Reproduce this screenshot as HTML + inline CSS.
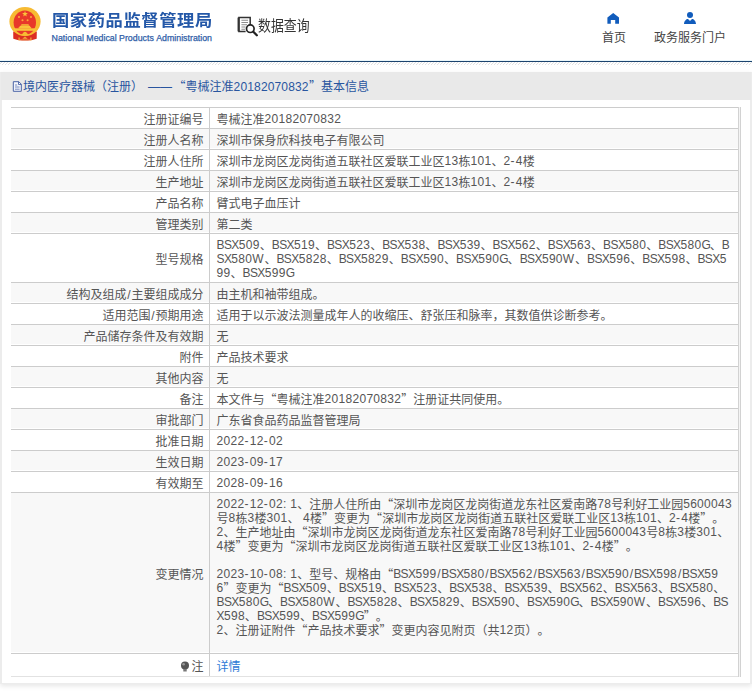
<!DOCTYPE html>
<html lang="zh-CN">
<head>
<meta charset="utf-8">
<title>国家药品监督管理局 数据查询</title>
<style>
*{box-sizing:border-box;margin:0;padding:0}
html,body{width:752px;height:691px;overflow:hidden;background:#fff}
body{text-spacing-trim:space-all;font-kerning:none;font-family:"Liberation Sans","Noto Sans CJK SC",sans-serif;font-size:12px;color:#555;position:relative}
.hdr{position:absolute;left:0;top:0;width:752px;height:61px;background:#fff}
.emblem{position:absolute;left:8px;top:5px;width:35px;height:38px}
.t1{position:absolute;left:51.7px;top:8px;font-size:16px;line-height:26px;font-weight:bold;color:#2458a8;white-space:nowrap;letter-spacing:0.55px;transform:scaleX(1.08);transform-origin:0 0}
.t2{position:absolute;left:51.6px;top:31.8px;font-size:8.8px;line-height:12px;color:#2f5ea8;white-space:nowrap;-webkit-text-stroke:0.25px #2f5ea8}
.q{position:absolute;left:258px;top:16px;font-size:15px;line-height:20px;color:#333;white-space:nowrap;transform:scaleX(.86);transform-origin:0 0}
.qi{position:absolute;left:238px;top:14px;width:22px;height:24px}
.nav{position:absolute;top:29px;font-size:12px;line-height:18px;color:#444;white-space:nowrap}
.navi{position:absolute}
.bline{position:absolute;left:0;top:61px;width:752px;height:1px;background:#1c446f;box-shadow:0 1px 0 rgba(28,68,111,.12)}
.hatch{position:absolute;left:0;top:62px;width:752px;height:3px;
 background:repeating-linear-gradient(135deg,#fff 0,#fff 1.4px,#e2e2e2 1.4px,#e2e2e2 2.12px)}
.cy{position:absolute;left:0;top:60px;width:752px;height:1px;background:#eaf7fb}
.rb{position:absolute;left:738px;top:107px;width:3px;height:570px;border-left:1px solid #d2d2d2;border-right:1px solid #d2d2d2;background:#f4f4f4}
.panel{position:absolute;left:0;top:72px;width:752px;height:612px;background:#fff;border:solid #ececec;border-width:0 2px 1px 2px;box-shadow:0 2px 5px rgba(0,0,0,.10)}
.ptitle{position:absolute;left:1px;top:72px;width:750px;height:28px;background:#e9e9e9;color:#28559f;font-size:12px;line-height:28px;white-space:nowrap}
.pt{position:absolute;top:1px;font-family:"Liberation Sans","Noto Sans CJK SC",sans-serif}
table{position:absolute;left:11px;top:107px;width:727px;border-collapse:collapse;table-layout:fixed;font-size:12px;line-height:14px;color:#555}
td{border-top:1px solid #ccc;border-bottom:1px solid #ccc;padding:5px 6px 1px 7px;vertical-align:middle;white-space:nowrap}
td.l{width:198px;text-align:right;border-right:1px solid #ccc;padding:5px 5px 1px 0}
tr.g td{background:#f8f8f8;box-shadow:inset 0 -1px 0 #fff}
.cq,td u{font-family:"Noto Sans CJK SC",sans-serif;text-decoration:none;line-height:0}
td b,td i{position:relative;top:-1px}
td b{font-weight:normal;letter-spacing:-.58px}
td i{font-style:normal;letter-spacing:.3px}
td s{text-decoration:none;letter-spacing:1.3px}
td s.sl{letter-spacing:0;margin:0 .8px}
td b.w{letter-spacing:.8px}
td b.k{letter-spacing:-1px}
.ln{display:inline-block;height:14px;vertical-align:top}
tr:last-child td{border-bottom-color:#e2e2e2}
a{color:#2f7bd6;text-decoration:none}
</style>
</head>
<body>
<div class="hdr">
  <svg class="emblem" viewBox="4 2 44 44" width="44" height="44" style="left:4px;top:2px;width:44px;height:44px">
    <defs><filter id="bl" x="-10%" y="-10%" width="120%" height="120%"><feGaussianBlur stdDeviation="0.42"/></filter></defs>
    <g filter="url(#bl)">
      <path d="M13.200 31.500 L36.800 31.500 L36.700 38.800 Q31 41.200 25 40.400 Q19 41.200 13.300 38.800 Z" fill="#dc2f24"/>
      <ellipse cx="25" cy="21.500" rx="15.600" ry="14.500" fill="#f7bb33"/>
      <ellipse cx="24.800" cy="22.600" rx="11.200" ry="12.100" fill="#e8372a"/>
      <path d="M14 28.300 H35.600 V30.800 H14 Z" fill="#f9c43a"/>
      <path d="M21.500 24.300 H28.500 L29 25.400 H21 Z M20 25.700 H29.800 L30.600 27.300 H19.200 Z M18.600 27.300 H31.200 V28.400 H18.600 Z" fill="#f9c43a"/>
      <path d="M20.800 35 Q22.500 34.300 23.200 32.700 Q25 30.600 26.800 32.700 Q27.500 34.300 29.200 35 Q25 36.300 20.800 35 Z" fill="#f7bb33"/>
      <path d="M22.300 38.700 L25 36.500 L27.700 38.700 Z" fill="#f4a93a"/>
      <path d="M18.500 37.600 H19.700 V40.500 H18.500 Z M30.300 37.600 H31.500 V40.500 H30.300 Z" fill="#f4a93a"/>
      <path d="M19.500 39.300 H30.500 V40.300 H19.500 Z" fill="#ef8f38" opacity=".75"/>
      <polygon points="25,11 25.750,13 27.900,13.100 26.200,14.400 26.800,16.500 25,15.300 23.200,16.500 23.800,14.400 22.100,13.100 24.250,13" fill="#fbc23a"/>
      <circle cx="19" cy="17" r="1.050" fill="#f9a83a"/>
      <circle cx="31" cy="17" r="1.050" fill="#f9a83a"/>
      <circle cx="22.500" cy="20.200" r="1.050" fill="#f9a83a"/>
      <circle cx="27.600" cy="20.200" r="1.050" fill="#f9a83a"/>
    </g>
  </svg>
  <div class="t1">国家药品监督管理局</div>
  <div class="t2">National Medical Products Administration</div>
  <svg class="qi" viewBox="0 0 24 24" width="24" height="24" style="left:236px;top:14px;width:24px;height:24px">
    <path d="M14.2 11.6 V3.600 H2.900 V17.4 H9.6" fill="none" stroke="#333" stroke-width="1.5"/>
    <path d="M2.600 3.600 V17.4" stroke="#333" stroke-width="2.1"/>
    <path d="M5.400 6.300 H12 M5.400 8.500 H12 M5.400 10.800 H11 M5.400 13 H9.500 M5.400 15.200 H9" stroke="#8c8c8c" stroke-width="1.100"/>
    <circle cx="14.300" cy="14.700" r="3.800" fill="#fff" stroke="#222" stroke-width="1.700"/>
    <path d="M17.300 17.800 L20.800 21.200" stroke="#222" stroke-width="2.300" stroke-linecap="round"/>
  </svg>
  <div class="q">数据查询</div>
  <svg class="navi" viewBox="0 0 16 14" width="16" height="14" style="left:605px;top:11px">
    <path d="M8.200 2 L14 6.500 V12.800 H10.200 V9 H5.800 V12.800 H2.400 V6.500 Z" fill="#115cbc"/>
  </svg>
  <div class="nav" style="left:602px">首页</div>
  <svg class="navi" viewBox="0 0 16 14" width="16" height="14" style="left:682px;top:11px">
    <circle cx="8" cy="4" r="3" fill="#115cbc"/>
    <path d="M2 13 C2 10 4.300 8 6 8 L8 10 L10 8 C11.700 8 14 10 14 13 Z" fill="#115cbc"/>
  </svg>
  <div class="nav" style="left:654px">政务服务门户</div>
</div>
<div class="bline"></div>
<div class="cy"></div>
<div class="hatch"></div>
<div class="panel"></div>
<div class="rb"></div>
<div class="ptitle">
  <svg viewBox="0 0 12 14" width="12" height="14" style="position:absolute;left:11px;top:8px">
    <path d="M1.300 1.700 H6.800 L9.300 4.200 V11.300 H1.300 Z" fill="#f3f5fb" stroke="#4a63a6" stroke-width="1"/>
    <path d="M6.500 1.700 V4.500 H9.300" fill="none" stroke="#4a63a6" stroke-width="0.9"/>
    <path d="M3 5 H5.200 M3 7 H7.600 M3 9.200 H7.600" stroke="#6a7fb8" stroke-width="0.9"/>
  </svg>
  <span class="pt" style="left:22px">境内医疗器械（注册）</span><span class="pt" style="left:147px">——</span><span class="pt" style="left:172.400px"><span class="cq">“</span>粤械注准</span><span class="pt" style="left:232.600px;letter-spacing:.15px">20182070832</span><span class="pt" style="left:308px"><span class="cq">”</span>基本信息</span>
</div>
<table>
<tr><td class="l">注册证编号</td><td><span class="ln" id="L0_0">粤械注准<i>20182070832</i></span></td></tr>
<tr class="g"><td class="l">注册人名称</td><td><span class="ln" id="L1_0">深圳市保身欣科技电子有限公司</span></td></tr>
<tr><td class="l">注册人住所</td><td><span class="ln" id="L2_0">深圳市龙岗区龙岗街道五联社区爱联工业区<i>13</i>栋<i>101</i>、<i>2<s>-</s>4</i>楼</span></td></tr>
<tr class="g"><td class="l">生产地址</td><td><span class="ln" id="L3_0">深圳市龙岗区龙岗街道五联社区爱联工业区<i>13</i>栋<i>101</i>、<i>2<s>-</s>4</i>楼</span></td></tr>
<tr><td class="l">产品名称</td><td><span class="ln" id="L4_0">臂式电子血压计</span></td></tr>
<tr class="g"><td class="l">管理类别</td><td><span class="ln" id="L5_0">第二类</span></td></tr>
<tr><td class="l">型号规格</td><td><span class="ln" id="L6_0"><b>BSX</b><i>509</i>、<b>BSX</b><i>519</i>、<b>BSX</b><i>523</i>、<b>BSX</b><i>538</i>、<b>BSX</b><i>539</i>、<b>BSX</b><i>562</i>、<b>BSX</b><i>563</i>、<b>BSX</b><i>580</i>、<b>BSX</b><i>580</i><b class="k">G</b>、<b>B</b></span><br><span class="ln" id="L6_1"><b>SX</b><i>580</i><b class="w">W</b>、<b>BSX</b><i>5828</i>、<b>BSX</b><i>5829</i>、<b>BSX</b><i>590</i>、<b>BSX</b><i>590</i><b class="k">G</b>、<b>BSX</b><i>590</i><b class="w">W</b>、<b>BSX</b><i>596</i>、<b>BSX</b><i>598</i>、<b>BSX</b><i>5</i></span><br><span class="ln" id="L6_2"><i>99</i>、<b>BSX</b><i>599</i><b class="k">G</b></span></td></tr>
<tr class="g"><td class="l">结构及组成<s class="sl">/</s>主要组成成分</td><td><span class="ln" id="L7_0">由主机和袖带组成。</span></td></tr>
<tr><td class="l">适用范围<s class="sl">/</s>预期用途</td><td><span class="ln" id="L8_0">适用于以示波法测量成年人的收缩压、舒张压和脉率，其数值供诊断参考。</span></td></tr>
<tr class="g"><td class="l">产品储存条件及有效期</td><td><span class="ln" id="L9_0">无</span></td></tr>
<tr><td class="l">附件</td><td><span class="ln" id="L10_0">产品技术要求</span></td></tr>
<tr class="g"><td class="l">其他内容</td><td><span class="ln" id="L11_0">无</span></td></tr>
<tr><td class="l">备注</td><td><span class="ln" id="L12_0">本文件与<u>“</u>粤械注准<i>20182070832</i><u>”</u>注册证共同使用。</span></td></tr>
<tr class="g"><td class="l">审批部门</td><td><span class="ln" id="L13_0">广东省食品药品监督管理局</span></td></tr>
<tr><td class="l">批准日期</td><td><span class="ln" id="L14_0"><i>2022<s>-</s>12<s>-</s>02</i></span></td></tr>
<tr class="g"><td class="l">生效日期</td><td><span class="ln" id="L15_0"><i>2023<s>-</s>09<s>-</s>17</i></span></td></tr>
<tr><td class="l">有效期至</td><td><span class="ln" id="L16_0"><i>2028<s>-</s>09<s>-</s>16</i></span></td></tr>
<tr class="g"><td class="l">变更情况</td><td><span class="ln" id="L17_0"><i>2022<s>-</s>12<s>-</s>02: 1</i>、注册人住所由<u>“</u>深圳市龙岗区龙岗街道龙东社区爱南路<i>78</i>号利好工业园<i>5600043</i></span><br><span class="ln" id="L17_1">号<i>8</i>栋<i>3</i>楼<i>301</i>、<i> 4</i>楼<u>”</u>变更为<u>“</u>深圳市龙岗区龙岗街道五联社区爱联工业区<i>13</i>栋<i>101</i>、<i>2<s>-</s>4</i>楼<u>”</u>。</span><br><span class="ln" id="L17_2"><i>2</i>、生产地址由<u>“</u>深圳市龙岗区龙岗街道龙东社区爱南路<i>78</i>号利好工业园<i>5600043</i>号<i>8</i>栋<i>3</i>楼<i>301</i>、</span><br><span class="ln" id="L17_3"><i>4</i>楼<u>”</u>变更为<u>“</u>深圳市龙岗区龙岗街道五联社区爱联工业区<i>13</i>栋<i>101</i>、<i>2<s>-</s>4</i>楼<u>”</u>。</span><br><span class="ln"></span><br><span class="ln" id="L17_5"><i>2023<s>-</s>10<s>-</s>08: 1</i>、型号、规格由<u>“</u><b>BSX</b><i>599<s class="sl">/</s></i><b>BSX</b><i>580<s class="sl">/</s></i><b>BSX</b><i>562<s class="sl">/</s></i><b>BSX</b><i>563<s class="sl">/</s></i><b>BSX</b><i>590<s class="sl">/</s></i><b>BSX</b><i>598<s class="sl">/</s></i><b>BSX</b><i>59</i></span><br><span class="ln" id="L17_6"><i>6</i><u>”</u>变更为<u>“</u><b>BSX</b><i>509</i>、<b>BSX</b><i>519</i>、<b>BSX</b><i>523</i>、<b>BSX</b><i>538</i>、<b>BSX</b><i>539</i>、<b>BSX</b><i>562</i>、<b>BSX</b><i>563</i>、<b>BSX</b><i>580</i>、</span><br><span class="ln" id="L17_7"><b>BSX</b><i>580</i><b class="k">G</b>、<b>BSX</b><i>580</i><b class="w">W</b>、<b>BSX</b><i>5828</i>、<b>BSX</b><i>5829</i>、<b>BSX</b><i>590</i>、<b>BSX</b><i>590</i><b class="k">G</b>、<b>BSX</b><i>590</i><b class="w">W</b>、<b>BSX</b><i>596</i>、<b>BS</b></span><br><span class="ln" id="L17_8"><b>X</b><i>598</i>、<b>BSX</b><i>599</i>、<b>BSX</b><i>599</i><b class="k">G</b><u>”</u>。</span><br><span class="ln" id="L17_9"><i>2</i>、注册证附件<u>“</u>产品技术要求<u>”</u>变更内容见附页（共<i>12</i>页）。</span><br><span class="ln"></span></td></tr>
<tr><td class="l" style="height:23px"><svg viewBox="0 0 10 12" width="10" height="12" style="vertical-align:-2px;margin-right:1px"><circle cx="5" cy="4.500" r="4" fill="#555"/><path d="M3.300 8 H6.700 V10.500 H3.300 Z" fill="#777"/><circle cx="3.600" cy="3.300" r="1.300" fill="#999"/></svg>注</td><td><a>详情</a></td></tr>
</table>
</body>
</html>
